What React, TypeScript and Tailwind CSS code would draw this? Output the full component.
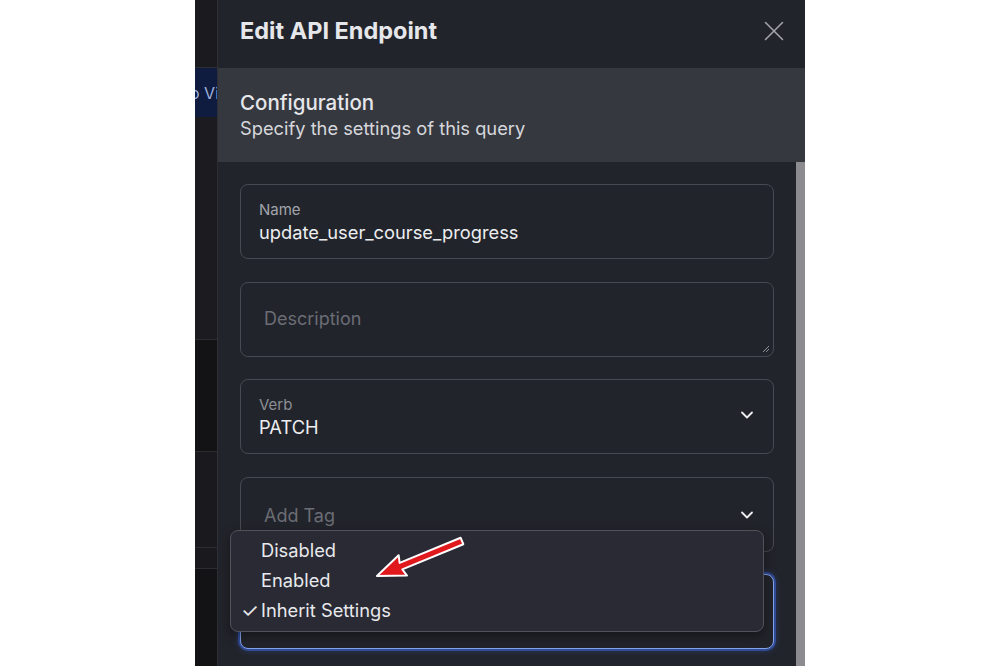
import { X, ChevronDown } from "lucide-react";

const Field = ({
  children,
  focused = false,
}: {
  children?: React.ReactNode;
  focused?: boolean;
}) => (
  <div
    className={`relative h-[75px] rounded-lg border bg-[#22242b] ${
      focused
        ? "border-[#86a2ea] shadow-[0_0_0_2px_rgba(55,95,200,0.6),0_0_6px_2px_rgba(55,95,200,0.35)]"
        : "border-[#474a53]"
    }`}
  >
    {children}
  </div>
);

const LeftStrip = () => (
  <div className="flex w-[23px] flex-col bg-[#1b1b1f] border-r border-[#2e2f35]">
    <div className="h-[68px] border-b border-[#2c2d32]" />
    <div className="flex h-[49px] items-center overflow-hidden bg-[#0f1c3f]">
      <span className="-ml-[5px] whitespace-nowrap text-[16px] text-[#9fb0dd]">o View</span>
    </div>
    <div className="h-[223px] bg-[#1c1c20] border-b border-[#2c2d32]" />
    <div className="h-[112px] bg-[#131316] border-b border-[#2c2d32]" />
    <div className="h-[96px] bg-[#1a1a1e] border-b border-[#2c2d32]" />
    <div className="h-[21px] bg-[#1a1a1e] border-b border-[#2c2d32]" />
    <div className="flex-1 bg-[#131316]" />
  </div>
);

export default function App() {
  return (
    <div
      className="relative flex h-[666px] w-[1000px] overflow-hidden bg-white"
      style={{ fontFamily: "Inter, 'Noto Sans', sans-serif" }}
    >
      <div className="w-[195px]" />
      <LeftStrip />
      <div className="flex w-[587px] flex-col bg-[#22242b]">
        <div className="flex h-[68px] items-center justify-between pb-[6px] pl-[22px] pr-[14px]">
          <h1 className="text-[23.5px] font-bold text-[#e6e7ea]">Edit API Endpoint</h1>
          <X className="h-[34px] w-[34px] text-[#a3a5ab]" strokeWidth={1.1} />
        </div>
        <div className="flex h-[94px] flex-col justify-center bg-[#363840] pl-[22px]">
          <h2 className="text-[20.5px] font-medium leading-[27px] text-[#e6e7ea]">Configuration</h2>
          <p className="text-[18.3px] leading-[25px] text-[#d6d7db]">Specify the settings of this query</p>
        </div>
        <div className="flex flex-1">
          <div className="flex flex-1 flex-col gap-[22.5px] px-[22px] pt-[22px]">
            <Field>
              <div className="flex h-full flex-col justify-center px-[18px]">
                <span className="text-[15px] leading-[21px] text-[#a2a4ab]">Name</span>
                <span className="text-[18.3px] leading-[25px] text-[#eceef0]">update_user_course_progress</span>
              </div>
            </Field>
            <Field>
              <div className="flex h-full items-center px-[23px] pb-[2px]">
                <span className="text-[18px] text-[#6b6d75]">Description</span>
              </div>
              <svg className="absolute bottom-[3px] right-[3px]" width="9" height="9" viewBox="0 0 9 9">
                <path d="M8 2 L2 8 M8 5 L5 8" stroke="#8d8f96" strokeWidth="1" />
              </svg>
            </Field>
            <Field>
              <div className="flex h-full items-center justify-between pl-[18px] pr-[16px]">
                <div className="flex flex-col">
                  <span className="text-[15px] leading-[21px] text-[#8d8f96]">Verb</span>
                  <span className="text-[18.3px] leading-[25px] text-[#eceef0]">PATCH</span>
                </div>
                <ChevronDown className="mb-[4px] h-[20px] w-[20px] text-[#eceef0]" strokeWidth={2.2} />
              </div>
            </Field>
            <Field>
              <div className="flex h-full items-center justify-between pl-[23px] pr-[16px] pt-[2px]">
                <span className="text-[18px] text-[#6b6d75]">Add Tag</span>
                <ChevronDown className="h-[20px] w-[20px] text-[#eceef0]" strokeWidth={2.2} />
              </div>
            </Field>
            <Field focused />
          </div>
          <div className="w-[9px] bg-[#8b8b90]" />
        </div>
      </div>
      <div className="flex-1" />

      <div className="absolute left-[230px] top-[530px] flex h-[102px] w-[534px] flex-col justify-center rounded-lg border border-[#50525b] bg-[#292a33] shadow-[0_4px_12px_rgba(0,0,0,0.4)]">
        {["Disabled", "Enabled", "Inherit Settings"].map((item) => (
          <div key={item} className="flex h-[30px] items-center text-[18.3px] text-[#e8e9ec]">
            <span className="w-[30px] pl-[10px] text-[20px]">{item === "Inherit Settings" ? "✓" : ""}</span>
            <span>{item}</span>
          </div>
        ))}
      </div>

      <svg className="absolute left-[350px] top-[525px]" width="130" height="65" viewBox="0 0 130 65">
        <g transform="translate(112,16) rotate(157.6)">
          <polygon
            points="0,-3.5 66,-3.5 64,-11 92,0 64,11 66,3.5 0,3.5"
            fill="#e0191d"
            stroke="#ffffff"
            strokeWidth="2"
            strokeLinejoin="round"
          />
        </g>
      </svg>
    </div>
  );
}
